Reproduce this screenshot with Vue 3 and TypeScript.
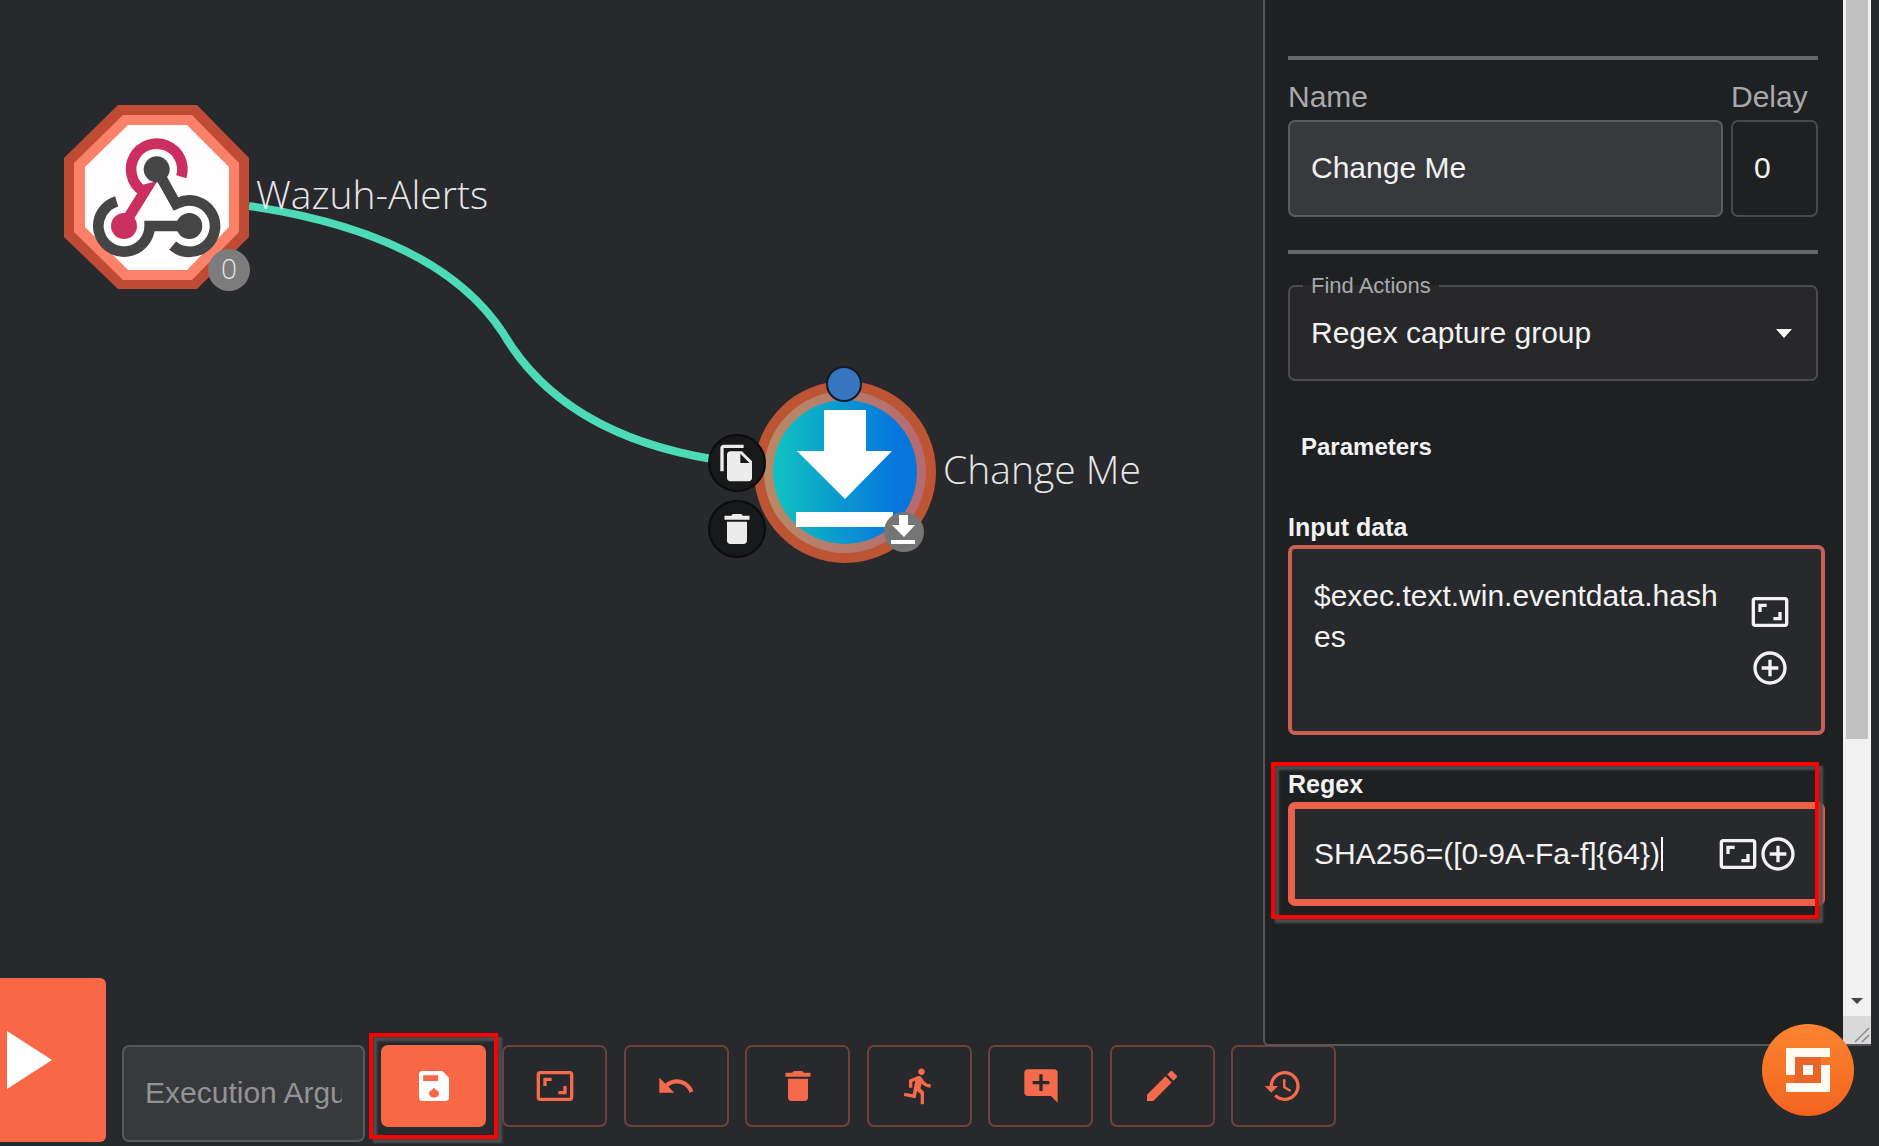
<script setup lang="ts">
import { ref } from 'vue'

interface Tool {
  id: string
  label: string
  path: string
}

const icons = {
  aspect:
    'M19 12h-2v3h-3v2h5v-5zM7 9h3V7H5v5h2V9zm14-6H3c-1.1 0-2 .9-2 2v14c0 1.1.9 2 2 2h18c1.1 0 2-.9 2-2V5c0-1.1-.9-2-2-2zm0 16.01H3V4.99h18v14.02z',
  plus:
    'M13 7h-2v4H7v2h4v4h2v-4h4v-2h-4V7zm-1-5C6.48 2 2 6.48 2 12s4.48 10 10 10 10-4.48 10-10S17.52 2 12 2zm0 18c-4.41 0-8-3.59-8-8s3.59-8 8-8 8 3.59 8 8-3.59 8-8 8z',
  trash: 'M6 19c0 1.1.9 2 2 2h8c1.1 0 2-.9 2-2V7.600H6v11.400zM19.500 4h-4l-1-1h-5l-1 1h-4v2.400h15V4z',
  copy:
    'M16 1H4c-1.100 0-2 .9-2 2v14h2V3h12V1zm-1 4H8c-1.100 0-1.990.9-1.990 2L6 21c0 1.100.89 2 1.990 2H19c1.100 0 2-.9 2-2V11l-6-6zm-1 7V6.500l5.500 5.500H14z',
  save:
    'M17 3H5c-1.110 0-2 .9-2 2v14c0 1.100.89 2 2 2h14c1.100 0 2-.9 2-2V7l-4-4zM12 19c-1.700 0-3-1-3-2.600 0-1 .8-1.600 1.600-1.800L12 13l1.400 1.600c.8.2 1.600.8 1.600 1.800 0 1.600-1.300 2.600-3 2.600zM14.500 9H5.500V5.500h9z',
}

const tools: Tool[] = [
  { id: 'fit', label: 'Fit to view', path: icons.aspect },
  {
    id: 'undo',
    label: 'Undo',
    path: 'M12.500 8c-2.650 0-5.050.99-6.900 2.600L2 7v9h9l-3.620-3.620c1.390-1.160 3.160-1.880 5.120-1.880 3.540 0 6.550 2.310 7.600 5.500l2.370-.78C21.080 11.030 17.150 8 12.500 8z',
  },
  { id: 'delete', label: 'Delete', path: icons.trash },
  {
    id: 'runs',
    label: 'Show executions',
    path: 'M13.490 5.480c1.100 0 2-.9 2-2s-.9-2-2-2-2 .9-2 2 .9 2 2 2zm-3.600 13.900l1-4.400 2.100 2v6h2v-7.500l-2.100-2 .6-3c1.300 1.500 3.300 2.500 5.500 2.500v-2c-1.900 0-3.500-1-4.300-2.400l-1-1.600c-.4-.6-1-1-1.700-1-.3 0-.5.1-.8.1l-5.200 2.200v4.700h2v-3.400l1.800-.7-1.600 8.100-4.900-1-.4 2 7 1.400z',
  },
  {
    id: 'comment',
    label: 'Add comment',
    path: 'M21.990 4c0-1.100-.89-2-1.990-2H4c-1.100 0-2 .9-2 2v12c0 1.100.9 2 2 2h14l4 4-.010-18zM17 11h-4v4h-2v-4H7V9h4V5h2v4h4v2z',
  },
  {
    id: 'edit',
    label: 'Edit workflow',
    path: 'M3 17.250V21h3.750L17.810 9.940l-3.750-3.750L3 17.250zM20.710 7.040c.39-.39.39-1.020 0-1.410l-2.340-2.340c-.39-.39-1.020-.39-1.410 0l-1.830 1.830 3.750 3.750 1.830-1.830z',
  },
  {
    id: 'history',
    label: 'Revision history',
    path: 'M13 3c-4.970 0-9 4.030-9 9H1l3.890 3.890.07.14L9 12H6c0-3.870 3.130-7 7-7s7 3.130 7 7-3.130 7-7 7c-1.930 0-3.680-.79-4.940-2.060l-1.420 1.420C8.270 19.990 10.510 21 13 21c4.970 0 9-4.030 9-9s-4.030-9-9-9zm-1 5v5l4.280 2.540.72-1.210-3.500-2.080V8H12z',
  },
]

const name = ref('Change Me')
const delay = ref('0')
const action = ref('Regex capture group')
const inputData = ref('$exec.text.win.eventdata.hashes')
const regex = ref('SHA256=([0-9A-Fa-f]{64})')
const execArg = ref('')
</script>

<template>
  <div class="app">
    <main class="main">
      <section class="canvas">
        <svg class="graph" width="1260" height="1046" viewBox="0 0 1260 1046">
          <defs>
            <linearGradient id="fill" x1="0" y1="0" x2="1" y2="0">
              <stop offset="0.05" stop-color="#10bfc2" />
              <stop offset="0.85" stop-color="#0676dc" />
            </linearGradient>
            <linearGradient id="ring" x1="0" y1="0" x2="1" y2="0">
              <stop offset="0" stop-color="#b88a66" />
              <stop offset="1" stop-color="#b56a70" />
            </linearGradient>
          </defs>

          <path d="M249 206Q438 234 503 333Q562 434 712 459" fill="none" stroke="#4ddab6" stroke-width="8" stroke-linejoin="round" />

          <g>
            <polygon points="118,105 197,105 249,158 249,237 197,289 118,289 64,237 64,158" fill="#c04b35" />
            <polygon points="123,115 192,115 239,163 239,232 192,280 123,280 74,232 74,163" fill="#fb8168" />
            <polygon points="128,125 187,125 229,167 229,227 187,270 128,270 85,227 85,167" fill="#fffdfd" />
            <g transform="translate(40 80) scale(.33333)" fill="none" stroke-width="32">
              <path d="M424 290A77 77 0 1 0 306 331L318 328L264 415" stroke="#cb2f60" />
              <circle cx="252" cy="438" r="39" fill="#cb2f60" />
              <path d="M350 268L408 372L415 369A77 77 0 1 1 398 497" stroke="#454545" />
              <circle cx="350" cy="268" r="39" fill="#454545" />
              <path d="M230 364A77 77 0 1 0 329 438L448 438" stroke="#454545" />
              <circle cx="448" cy="438" r="39" fill="#454545" />
            </g>
            <circle cx="229" cy="270" r="21" fill="#7c7c7c" />
            <text class="count" x="229" y="279" text-anchor="middle">0</text>
            <text class="caption" x="256" y="209">Wazuh-Alerts</text>
          </g>

          <g>
            <circle cx="845" cy="472" r="91" fill="#bd5535" />
            <circle cx="845" cy="472" r="81" fill="url(#ring)" />
            <circle cx="845" cy="472" r="72" fill="url(#fill)" />
            <path d="M824 410h42v41h26l-47 48-48-48h27zM796 512h97v15h-97z" fill="#fff" />
            <circle cx="844" cy="384" r="17" fill="#3676bf" stroke="#111a2c" stroke-width="2" />
            <circle cx="904" cy="532" r="20" fill="#757575" />
            <path d="M899 515h9v10h7l-11 12-12-12h7zM891 540h24v4h-24z" fill="#fff" />
            <text class="caption" x="943" y="484">Change Me</text>
          </g>
        </svg>
        <button class="node-btn copy" type="button" aria-label="Duplicate node">
          <svg width="40" height="40" viewBox="0 0 24 24"><path :d="icons.copy" /></svg>
        </button>
        <button class="node-btn remove" type="button" aria-label="Delete node">
          <svg width="40" height="40" viewBox="0 0 24 24"><path :d="icons.trash" /></svg>
        </button>
      </section>

      <aside class="panel">
        <form class="panel-body" @submit.prevent>
          <hr />
          <div class="pair">
            <div class="grow">
              <label class="caption-label" for="name">Name</label>
              <input id="name" v-model="name" class="box filled" type="text" />
            </div>
            <div class="narrow">
              <label class="caption-label" for="delay">Delay</label>
              <input id="delay" v-model="delay" class="box" type="text" />
            </div>
          </div>
          <hr />
          <fieldset class="action">
            <legend><label for="action">Find Actions</label></legend>
            <div class="select-row">
              <select id="action" v-model="action">
                <option>Regex capture group</option>
              </select>
              <svg width="16" height="12" viewBox="0 0 16 12"><path d="M0 3h16L8 12z" /></svg>
            </div>
          </fieldset>

          <h2>Parameters</h2>

          <div class="param">
            <label for="data">Input data</label>
            <div class="param-box tall">
              <textarea id="data" v-model="inputData" spellcheck="false"></textarea>
              <div class="icons stack">
                <button type="button" aria-label="Expand input data">
                  <svg width="40" height="40" viewBox="0 0 24 24"><path :d="icons.aspect" /></svg>
                </button>
                <button type="button" aria-label="Insert variable in input data">
                  <svg width="40" height="40" viewBox="0 0 24 24"><path :d="icons.plus" /></svg>
                </button>
              </div>
            </div>
          </div>

          <div class="param">
            <label for="regex">Regex</label>
            <div class="param-box focused">
              <div class="typed">
                <input id="regex" v-model="regex" type="text" spellcheck="false" />
                <i class="cursor"></i>
              </div>
              <div class="icons">
                <button type="button" aria-label="Expand regex">
                  <svg width="40" height="40" viewBox="0 0 24 24"><path :d="icons.aspect" /></svg>
                </button>
                <button type="button" aria-label="Insert variable in regex">
                  <svg width="40" height="40" viewBox="0 0 24 24"><path :d="icons.plus" /></svg>
                </button>
              </div>
            </div>
            <div class="mark mark-field"></div>
          </div>
        </form>

        <div class="scrollbar">
          <div class="track"><div class="thumb"></div></div>
          <svg class="down" width="12" height="6" viewBox="0 0 12 6"><path d="M0 0h12L6 6z" fill="#444" /></svg>
          <svg class="grip" width="28" height="28" viewBox="0 0 28 28">
            <path d="M12 26L26 12M19 26L26 19" fill="none" stroke="#888" stroke-width="1.500" />
          </svg>
        </div>
      </aside>
    </main>

    <footer class="toolbar">
      <button class="play" type="button" aria-label="Run workflow">
        <svg width="45" height="58" viewBox="0 0 45 58"><path d="M0 0L45 29 0 58z" fill="#fff" /></svg>
      </button>
      <div class="exec">
        <input v-model="execArg" type="text" placeholder="Execution Argument" aria-label="Execution Argument" />
      </div>
      <div class="tools">
        <div class="save-slot">
          <button class="tool save" type="button" aria-label="Save workflow">
            <svg width="40" height="40" viewBox="0 0 24 24"><path :d="icons.save" fill-rule="evenodd" /></svg>
          </button>
          <div class="mark mark-save"></div>
        </div>
        <button v-for="t in tools" :key="t.id" class="tool" type="button" :aria-label="t.label">
          <svg width="40" height="40" viewBox="0 0 24 24"><path :d="t.path" /></svg>
        </button>
      </div>
    </footer>

    <button class="fab" type="button" aria-label="Support chat">
      <svg width="46" height="46" viewBox="0 0 46 46">
        <path d="M9 9h27v28H9z" fill="#e8642a" />
        <path d="M1 1h44v9H10v18H1zM36 18h9v27H1v-9h35zM18 18h10v10H18z" fill="#fffaf2" />
      </svg>
    </button>
  </div>
</template>

<style>
body {
  margin: 0;
  background: #28292c;
}
</style>

<style scoped>
* {
  box-sizing: border-box;
}
.app {
  position: relative;
  display: flex;
  flex-direction: column;
  min-height: 100vh;
  overflow: hidden;
  background: #28292c;
  color: #f2f2f2;
  font-family: 'Liberation Sans', Arial, sans-serif;
  font-size: 30px;
}
button,
input,
select,
textarea {
  margin: 0;
  padding: 0;
  border: 0;
  background: none;
  color: inherit;
  font: inherit;
  outline: 0;
}
button svg {
  display: block;
  fill: currentColor;
}
.main {
  flex: 1;
  display: flex;
  padding-right: 8px;
}
.canvas {
  position: relative;
  flex: 1;
  min-width: 0;
  overflow: hidden;
}
.graph {
  display: block;
}
.caption,
.count {
  fill: #e6e6e8;
  font-family: 'Open Sans', 'Noto Sans', sans-serif;
  font-weight: 300;
  font-size: 39px;
}
.count {
  font-size: 28px;
}
.node-btn {
  position: absolute;
  left: 708px;
  display: grid;
  place-items: center;
  width: 58px;
  height: 58px;
  border: 2px solid #0c0c0d;
  border-radius: 50%;
  background: #18191a;
  color: #ececec;
}
.copy {
  top: 434px;
}
.remove {
  top: 500px;
}

.panel {
  position: relative;
  z-index: 2;
  display: flex;
  width: 608px;
  border: solid #55565a;
  border-width: 0 0 2px 2px;
  border-bottom-left-radius: 6px;
  background: #1f2022;
}
.panel-body {
  flex: 1;
  min-width: 0;
  padding: 56px 25px 0 23px;
}
hr {
  height: 4px;
  margin: 0;
  border: 0;
  background: #66676a;
}
.pair {
  display: flex;
  gap: 8px;
  padding: 20px 0 33px;
}
.grow {
  flex: 1;
  min-width: 0;
}
.narrow {
  width: 87px;
}
.caption-label {
  display: block;
  margin-bottom: 6px;
  line-height: 34px;
  color: #a9a9ad;
}
.box {
  display: block;
  width: 100%;
  height: 97px;
  padding: 0 21px 2px;
  border: 2px solid #48494c;
  border-radius: 7px;
}
.filled {
  border-color: #5b5c5f;
  background: #38393d;
}
.action {
  margin: 20px 0 0;
  padding: 0 24px 13px 21px;
  border: 2px solid #4b4c4f;
  border-radius: 7px;
  background: #28282a;
}
.action legend {
  margin-left: -8px;
  padding: 0 8px;
  color: #a9a9ad;
  font-size: 22px;
  line-height: 24px;
}
.select-row {
  display: flex;
  align-items: center;
}
.select-row select {
  flex: 1;
  height: 68px;
  appearance: none;
}
.select-row svg {
  fill: #fff;
}
h2 {
  margin: 52px 0 51px 13px;
  font-size: 24px;
  line-height: 28px;
}
.param {
  position: relative;
  margin: 0 -7px 34px 0;
}
.param > label {
  display: block;
  margin-bottom: 3px;
  font-size: 25px;
  font-weight: 700;
  line-height: 30px;
}
.param-box {
  display: flex;
  align-items: center;
  justify-content: space-between;
  border: 4px solid #c86053;
  border-radius: 7px;
  background: #28292c;
}
.tall {
  height: 190px;
  padding: 0 31px 0 22px;
}
.tall textarea {
  width: 412px;
  height: 100%;
  padding-top: 26px;
  line-height: 41px;
  resize: none;
  overflow: hidden;
}
.focused {
  height: 104px;
  padding: 0 20px 0 19px;
  border: 7px solid #ee6149;
}
.typed {
  display: flex;
  align-items: center;
}
.typed input {
  width: 347px;
}
.cursor {
  width: 2px;
  height: 34px;
  background: #fff;
}
.icons {
  display: flex;
}
.stack {
  flex-direction: column;
  gap: 16px;
}
.mark {
  position: absolute;
  border: 4px solid #f00;
  filter: drop-shadow(4px 4px 1px #4d4f4f);
  pointer-events: none;
}
.mark-field {
  inset: -7px 6px -13px -17px;
}
.mark-save {
  inset: -12px -12px -12px -12px;
}

.scrollbar {
  display: flex;
  flex-direction: column;
  align-items: center;
  width: 28px;
  background: #f1f1f1;
}
.track {
  flex: 1;
  width: 22px;
}
.thumb {
  height: 74%;
  background: #c0c0c1;
}
.down {
  margin: 0 0 12px;
}
.grip {
  background: #d9d9d9;
}

.toolbar {
  position: relative;
  z-index: 1;
  display: flex;
  align-items: flex-start;
  gap: 16px;
  height: 168px;
  margin-top: -68px;
}
.play {
  display: flex;
  align-items: center;
  width: 106px;
  height: 164px;
  padding-left: 7px;
  border-radius: 0 6px 6px 0;
  background: #f86846;
}
.exec {
  width: 243px;
  height: 97px;
  margin-top: 67px;
  padding: 6px 21px 0;
  border: 2px solid #58595c;
  border-radius: 7px;
  background: #38393c;
}
.exec input {
  width: 100%;
  height: 80px;
}
.exec input::placeholder {
  color: #929396;
}
.tools {
  display: flex;
  justify-content: space-between;
  width: 955px;
  margin-top: 67px;
}
.save-slot {
  position: relative;
}
.tool {
  display: grid;
  place-items: center;
  width: 105px;
  height: 82px;
  border: 2px solid #70403c;
  border-radius: 7px;
  color: #f46a4b;
}
.save {
  border-color: #f86846;
  background: #f86846;
  color: #fff;
}
.fab {
  position: absolute;
  right: 25px;
  bottom: 30px;
  z-index: 3;
  display: grid;
  place-items: center;
  width: 92px;
  height: 92px;
  border-radius: 50%;
  background: linear-gradient(#fb8430, #f3641f);
}
</style>
